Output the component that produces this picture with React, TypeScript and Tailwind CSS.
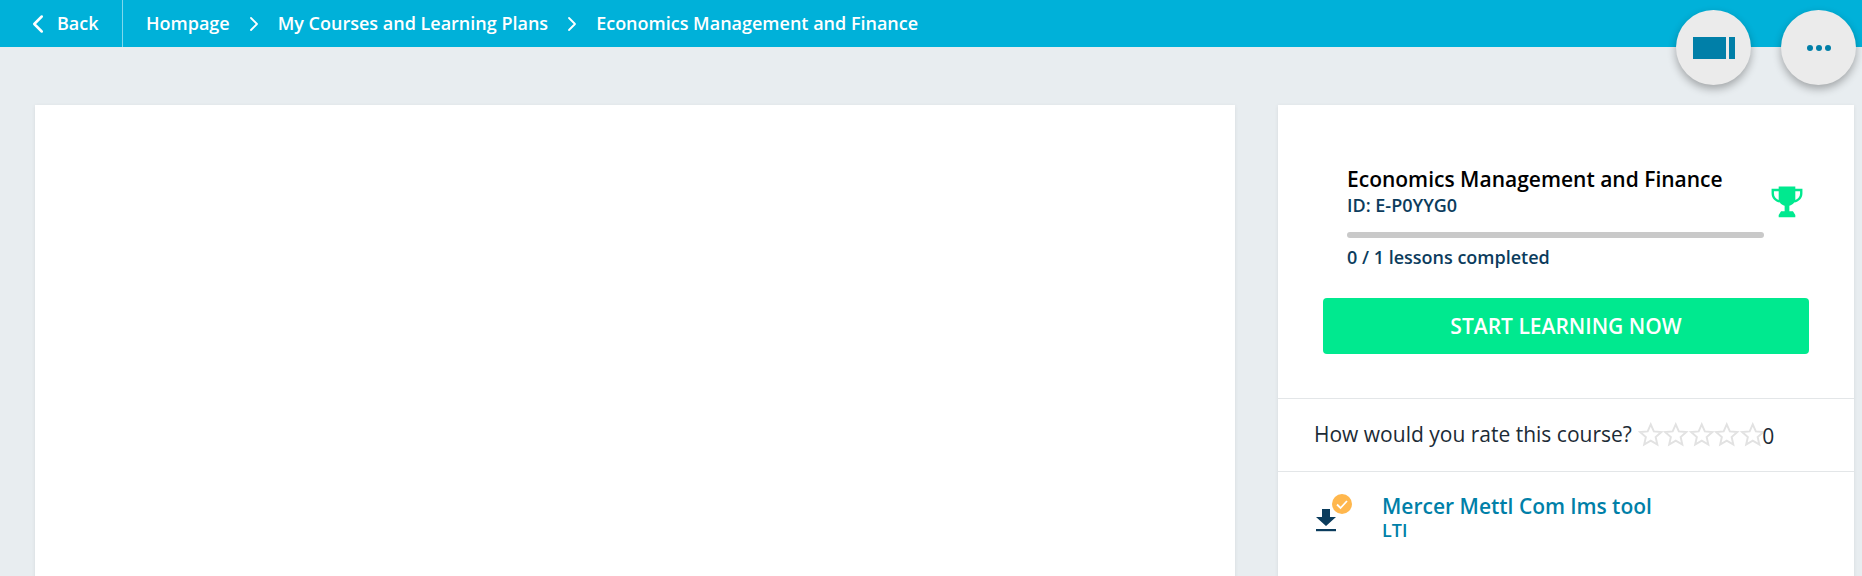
import React from 'react';
import { ChevronLeft, ChevronRight } from 'lucide-react';

const font = { fontFamily: '"Open Sans", "Noto Sans", sans-serif' };

function Star() {
  return (
    <svg viewBox="0 0 24 24" className="w-[25.5px] h-[25.5px] shrink-0" fill="none" stroke="#e2e2e2" strokeWidth="1.8">
      <path d="M12 2.200l2.900 6.600 7.100.7-5.400 4.700 1.600 7-6.200-3.700-6.200 3.700 1.600-7L2 9.500l7.100-.7z" />
    </svg>
  );
}

export default function App() {
  return (
    <div className="relative h-[576px] w-[1862px] overflow-hidden bg-[#e8edf0]" style={font}>
      {/* Top bar */}
      <div className="h-[47px] bg-[#00b1d9] flex items-center text-white text-[18px] font-semibold">
        <div className="h-full w-[123px] border-r border-[#7fd8ec] flex items-center pl-[23px] gap-[4px]">
          <ChevronLeft className="w-[30px] h-[30px]" strokeWidth={2} />
          <span>Back</span>
        </div>
        <div className="flex items-center pl-[23px]">
          <span>Hompage</span>
          <ChevronRight className="w-[24px] h-[24px] mx-[12px]" strokeWidth={1.8} />
          <span>My Courses and Learning Plans</span>
          <ChevronRight className="w-[24px] h-[24px] mx-[12px]" strokeWidth={1.8} />
          <span>Economics Management and Finance</span>
        </div>
      </div>

      {/* Floating buttons */}
      <div className="absolute top-[10px] left-[1676px] w-[75px] h-[75px] rounded-full bg-[#ebebeb] shadow-[0_4px_8px_rgba(0,0,0,0.3)] flex items-center justify-center gap-[3px]">
        <div className="w-[33px] h-[22px] bg-[#007fa8]" />
        <div className="w-[6px] h-[22px] bg-[#007fa8]" />
      </div>
      <div className="absolute top-[10px] left-[1781px] w-[75px] h-[75px] rounded-full bg-[#ebebeb] shadow-[0_4px_8px_rgba(0,0,0,0.3)] flex items-center justify-center gap-[3px]">
        <div className="w-[6px] h-[6px] rounded-full bg-[#007fa8]" />
        <div className="w-[6px] h-[6px] rounded-full bg-[#007fa8]" />
        <div className="w-[6px] h-[6px] rounded-full bg-[#007fa8]" />
      </div>

      <div className="flex pt-[58px] pl-[35px] gap-[43px]">
        {/* Player area */}
        <div className="w-[1200px] h-[600px] bg-white shadow-[0_1px_4px_rgba(0,0,0,0.08)]" />

        {/* Course panel */}
        <div className="w-[576px] h-[600px] bg-white shadow-[0_1px_4px_rgba(0,0,0,0.08)]">
          <div className="h-[294px] border-b border-[#e3e6e8] px-[45px] pt-[60px]">
            <div className="relative pl-[24px]">
              <div className="text-[21px] leading-[29px] font-semibold text-black">Economics Management and Finance</div>
              <div className="text-[18px] leading-[23px] font-semibold text-[#0b3c5d]">ID: E-P0YYG0</div>
              <div className="w-[417px] h-[6px] mt-[15px] rounded-full bg-[#c9c9c9]" />
              <div className="mt-[7px] text-[18px] leading-[24px] font-semibold text-[#0b3c5d]">0 / 1 lessons completed</div>
              <svg viewBox="0 0 32 32" className="absolute left-[445px] top-[19px] w-[38px] h-[38px]" fill="#00e98f">
                <path d="M9 2h14v2h6v4c0 4-3 7-7 7.600-1 1.400-2.400 2.400-4 2.800V23h3l2 3v2H9v-2l2-3h3v-4.600c-1.600-.4-3-1.400-4-2.800C6 15 3 12 3 8V4h6V2zm0 4H5v2c0 2.600 1.700 4.800 4 5.500V6zm14 0v7.500c2.300-.7 4-2.900 4-5.500V6h-4z" />
              </svg>
            </div>
            <button className="mt-[29px] w-[486px] h-[56px] pt-[2px] rounded-[4px] bg-[#00e98f] text-white text-[21px] font-semibold flex items-center justify-center">
              START LEARNING NOW
            </button>
          </div>

          <div className="h-[73px] border-b border-[#e3e6e8] pl-[36px] flex items-center text-[21px] text-[#1c2b36]">
            <span className="mr-[6px]">How would you rate this course?</span>
            <Star /><Star /><Star /><Star /><Star />
            <span className="mt-[4px] -ml-[3px]">0</span>
          </div>

          <div className="flex pl-[38px] pt-[21px]">
            <div className="relative w-[48px] h-[50px] mt-[1px]">
              <svg viewBox="0 0 20 24" className="absolute left-0 top-[12px] w-[20px] h-[28px]" fill="#0b3c5d">
                <path d="M6 1h8v8h6l-10 9L0 9h6z" />
                <rect x="0" y="21" width="20" height="2.200" />
              </svg>
              <svg viewBox="0 0 20 20" className="absolute left-[16px] top-0 w-[20px] h-[20px]">
                <circle cx="10" cy="10" r="10" fill="#ffb74d" />
                <path d="M5 10.500l3.500 3.500L15 7" fill="none" stroke="#fff" strokeWidth="1.800" />
              </svg>
            </div>
            <div className="pl-[18px]">
              <div className="text-[21px] leading-[27px] font-semibold text-[#007fa8]">Mercer Mettl Com lms tool</div>
              <div className="text-[18px] leading-[20px] font-semibold text-[#007fa8]">LTI</div>
            </div>
          </div>
        </div>
      </div>
    </div>
  );
}
